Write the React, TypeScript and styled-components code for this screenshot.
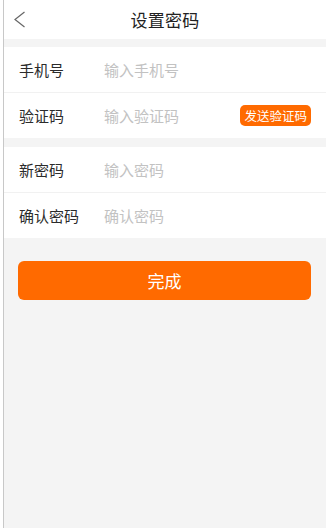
import React from "react"
import styled, { createGlobalStyle } from "styled-components"

const GlobalStyle = createGlobalStyle`
    html, body {
        margin: 0;
        padding: 0;
        background: #ffffff;
        font-family: "Noto Sans CJK SC", "Noto Sans", sans-serif;
    }
    * {
        box-sizing: border-box;
    }
`

const fields = [
    { group: 1, label: "手机号", placeholder: "输入手机号" },
    { group: 1, label: "验证码", placeholder: "输入验证码", code: true },
    { group: 2, label: "新密码", placeholder: "输入密码" },
    { group: 2, label: "确认密码", placeholder: "确认密码" },
]

type FieldType = {
    label: string
    placeholder: string
    code?: boolean
    last?: boolean
}

function Field(props: FieldType) {
    return (
        <Row $last={props.last}>
            <Label>{props.label}</Label>
            <Input placeholder={props.placeholder} />
            {props.code && <CodeButton>发送验证码</CodeButton>}
        </Row>
    )
}

export default function App() {
    const first = fields.filter((f) => f.group === 1)
    const second = fields.filter((f) => f.group === 2)
    return (
        <>
            <GlobalStyle />
            <Page>
                <Header>
                    <Back>
                        <svg width="13" height="17" viewBox="0 0 13 17" fill="none">
                            <polyline points="11.5,1 2,8.5 11.5,16" stroke="#666" strokeWidth="1.2" />
                        </svg>
                    </Back>
                    <Title>设置密码</Title>
                </Header>
                <Group $gap={8}>
                    {first.map((f, i) => (
                        <Field key={f.label} {...f} last={i === first.length - 1} />
                    ))}
                </Group>
                <Group $gap={9}>
                    {second.map((f, i) => (
                        <Field key={f.label} {...f} last={i === second.length - 1} />
                    ))}
                </Group>
                <Footer>
                    <Submit>完成</Submit>
                </Footer>
            </Page>
        </>
    )
}

const Page = styled.div`
    margin-left: 3px;
    min-height: 528px;
    border-left: 1px solid #c8c8c8;
    background: #f4f4f4;
    display: flex;
    flex-direction: column;
`
const Header = styled.div`
    position: relative;
    height: 39px;
    background: #ffffff;
    display: flex;
    align-items: center;
    justify-content: center;
`
const Back = styled.div`
    position: absolute;
    left: 9px;
    top: 11px;
    display: flex;
`
const Title = styled.h1`
    margin: 0;
    font-size: 17px;
    font-weight: 400;
    color: #222;
    letter-spacing: 0.3px;
`
const Group = styled.div<{ $gap: number }>`
    margin-top: ${(p) => p.$gap}px;
    background: #ffffff;
`
const Row = styled.div<{ $last?: boolean }>`
    height: ${(p) => (p.$last ? "45px" : "46px")};
    display: flex;
    align-items: center;
    padding: 0 15px 0 15px;
    border-bottom: ${(p) => (p.$last ? "none" : "1px solid #f1f1f1")};
`
const Label = styled.span`
    width: 85px;
    flex-shrink: 0;
    font-size: 15px;
    color: #2b2b2b;
`
const Input = styled.input`
    flex: 1;
    min-width: 0;
    border: none;
    outline: none;
    padding: 0;
    font-family: inherit;
    font-size: 15px;
    color: #333;
    background: transparent;
    &::placeholder {
        color: #c2c2c2;
    }
`
const CodeButton = styled.button`
    height: 21px;
    padding: 0 4px;
    border: none;
    border-radius: 5px;
    background: #ff6a00;
    color: #ffffff;
    font-family: inherit;
    font-size: 12.5px;
    line-height: 21px;
    white-space: nowrap;
`
const Footer = styled.div`
    padding: 23px 15px 0 14px;
`
const Submit = styled.button`
    width: 100%;
    height: 39px;
    border: none;
    border-radius: 6px;
    background: #ff6a00;
    color: #ffffff;
    font-family: inherit;
    font-size: 17px;
`
